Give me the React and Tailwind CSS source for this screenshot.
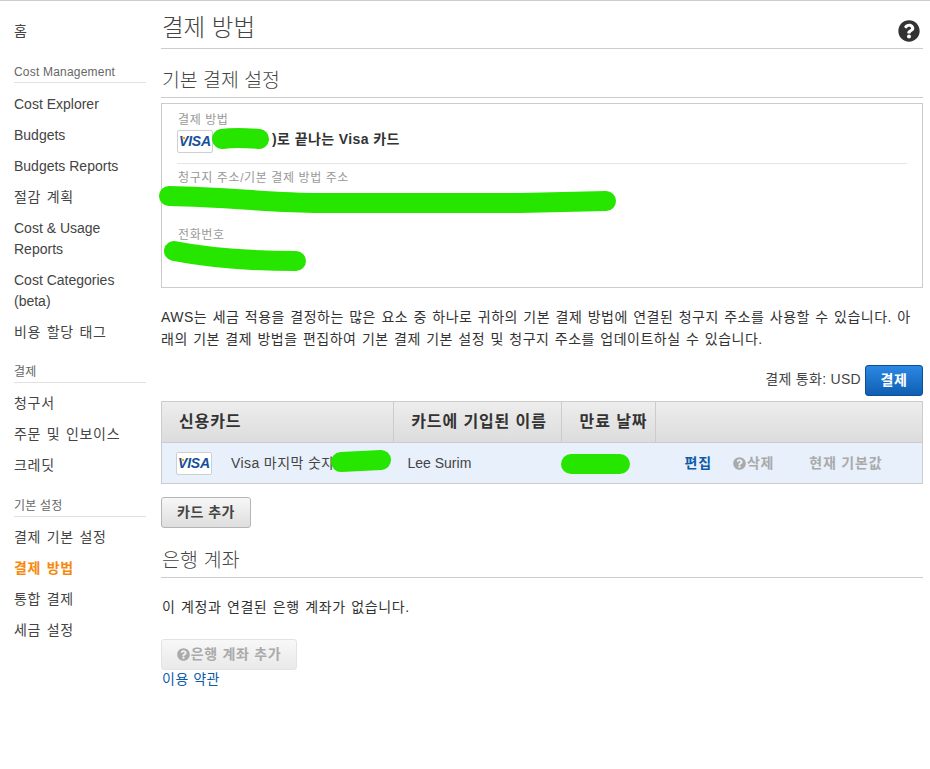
import React from 'react';
import { FaQuestionCircle } from 'react-icons/fa';

const FONT = "font-['Liberation_Sans','Noto_Sans_CJK_KR',sans-serif]";

const sideGroups = [
  { title: 'Cost Management', top: 'mt-[20px]', listGap: 'mt-[11px]', items: ['Cost Explorer', 'Budgets', 'Budgets Reports', '절감 계획', 'Cost & Usage Reports', 'Cost Categories (beta)', '비용 할당 태그'] },
  { title: '결제', top: 'mt-[19px]', listGap: 'mt-[10px]', items: ['청구서', '주문 및 인보이스', '크레딧'] },
  { title: '기본 설정', top: 'mt-[20px]', listGap: 'mt-[10px]', items: ['결제 기본 설정', '결제 방법', '통합 결제', '세금 설정'] },
];

const hasHangul = (text) => /[가-힣]/.test(text);

function VisaLogo({ className }) {
  return (
    <span className={`relative flex items-center justify-center bg-white border border-[#cfcfcf] rounded-[2px] ${className}`}>
      <span className="font-['Liberation_Sans',sans-serif] text-[14px] font-bold italic tracking-[-0.2px] text-[#14509b]">VISA</span>
      <span className="absolute left-[4px] top-[6px] w-[3px] h-[2px] bg-[#f0a81e]"></span>
    </span>
  );
}

function Sidebar() {
  return (
    <aside className="w-[132px] ml-[14px] shrink-0 pt-[20px] text-[14px] leading-[21px] text-[#444]">
      <div>홈</div>
      {sideGroups.map((group) => (
        <div key={group.title} className={group.top}>
          <div className="text-[12px] leading-[21px] text-[#666] tracking-[0.2px] border-b border-[#e1e1e1] h-[21px] mt-[10px]">{group.title}</div>
          <div className={`flex flex-col gap-[10px] ${group.listGap}`}>
            {group.items.map((item) => (
              <div
                key={item}
                className={`${hasHangul(item) ? 'tracking-[0.7px] [word-spacing:1px]' : ''} ${item === '결제 방법' ? 'text-[#f58a0e] font-bold' : ''}`}
              >
                {item}
              </div>
            ))}
          </div>
        </div>
      ))}
    </aside>
  );
}

function Field({ label, children }) {
  return (
    <div>
      <div className="text-[12px] leading-[16px] text-[#999] tracking-[0.6px]">{label}</div>
      {children}
    </div>
  );
}

function Scribbles() {
  // 스크린샷의 가림 표시 (초록색 펜)
  return (
    <svg className="absolute left-0 top-0 pointer-events-none" width="930" height="769" fill="none" stroke="#26e600" strokeWidth="20" strokeLinecap="round" strokeLinejoin="round">
      <path d="M222 138 C235 136 248 137 259 138" />
      <path d="M169 195 C230 196 270 202 320 202 L520 202 L606 200" />
      <path d="M174 250 C210 257 250 260 296 260" />
      <path d="M341 461 L381 459" />
      <path d="M571 463 L620 463" />
    </svg>
  );
}

export default function App() {
  return (
    <div className={`relative w-[930px] h-[769px] bg-white border-t border-[#ccc] flex overflow-hidden ${FONT} text-[#444]`}>
      <Sidebar />

      <main className="ml-[15px] w-[762px]">
        {/* 제목 */}
        <div className="flex items-center justify-between h-[48px] border-b border-[#ccc]">
          <h1 className="text-[23.5px] font-light leading-[30px] text-[#444] ml-[1px] mt-[7px]">결제 방법</h1>
          <FaQuestionCircle className="text-[#333] mr-[3px] mt-[13px]" size={22} />
        </div>

        <h2 className="text-[19.4px] font-light leading-[28px] mt-[17px] ml-[1px] h-[31px] text-[#444]">기본 결제 설정</h2>
        <div className="border-t border-[#ccc]"></div>

        {/* 기본 결제 설정 카드 */}
        <div className="mt-[5px] h-[185px] border border-[#ccc] px-[16px] pt-[8px]">
          <Field label="결제 방법">
            <div className="flex items-center text-[14px] font-bold text-[#333] mt-[2px] pb-[10px] border-b border-[#e5e5e5] w-[730px] -ml-[1px]">
              <VisaLogo className="w-[36px] h-[23px]" />
              <span className="ml-[59px] leading-[18px] mb-[5px] tracking-[0.4px]">)로 끝나는 Visa 카드</span>
            </div>
          </Field>
          <div className="mt-[6px]">
            <Field label="청구지 주소/기본 결제 방법 주소" />
          </div>
          <div className="mt-[41px]">
            <Field label="전화번호" />
          </div>
        </div>

        <p className="mt-[18px] text-[14px] leading-[22px] text-[#333] tracking-[0.5px] [word-spacing:1px]">
          AWS는 세금 적용을 결정하는 많은 요소 중 하나로 귀하의 기본 결제 방법에 연결된 청구지 주소를 사용할 수 있습니다. 아래의 기본 결제 방법을 편집하여 기본 결제 기본 설정 및 청구지 주소를 업데이트하실 수 있습니다.
        </p>

        <div className="flex items-center justify-end gap-[4px] mt-[15px] text-[14px] text-[#444]">
          <span className="tracking-[0.3px] mb-[2px]">결제 통화: USD</span>
          <button className="w-[58px] h-[31px] rounded-[3px] border border-[#0b4f94] bg-gradient-to-b from-[#2b88e3] to-[#0e5fb2] text-white text-[14px] font-bold tracking-[0.5px]">결제</button>
        </div>

        {/* 신용카드 표 */}
        <table className="mt-[5px] w-full table-fixed border border-[#ccc] border-collapse text-[14px]">
          <thead>
            <tr className="h-[41px] bg-gradient-to-b from-[#ededed] to-[#dcdcdc] text-[#333] text-[16px] tracking-[0.9px]">
              <th className="w-[232px] border-r border-[#ccc] text-left pl-[17px] font-bold">신용카드</th>
              <th className="w-[168px] border-r border-[#ccc] pl-[3px] font-bold">카드에 기입된 이름</th>
              <th className="w-[94px] border-r border-[#ccc] pl-[10px] font-bold">만료 날짜</th>
              <th></th>
            </tr>
          </thead>
          <tbody>
            <tr className="h-[41px] bg-[#e8f1fb] border-t border-[#ccc]">
              <td className="pl-[14px]">
                <div className="flex items-center gap-[19px]">
                  <VisaLogo className="w-[36px] h-[23px]" />
                  <span className="text-[#444] tracking-[0.4px]">Visa 마지막 숫자</span>
                </div>
              </td>
              <td className="pl-[14px] text-[#444]">Lee Surim</td>
              <td></td>
              <td className="text-[14px] font-bold tracking-[0.8px]">
                <div className="flex items-center ml-[29px]">
                  <span className="text-[#0f5ba7]">편집</span>
                  <span className="flex items-center text-[#aaa] ml-[21px]">
                    <FaQuestionCircle size={13} className="mr-[1px]" />삭제
                  </span>
                  <span className="text-[#aaa] ml-[35px]">현재 기본값</span>
                </div>
              </td>
            </tr>
          </tbody>
        </table>

        <button className="block mt-[13px] w-[90px] h-[31px] rounded-[3px] border border-[#b5b5b5] bg-gradient-to-b from-[#f7f7f7] to-[#dedede] text-[14px] font-bold text-[#444] tracking-[0.5px]">카드 추가</button>

        <h2 className="text-[19.4px] font-light leading-[28px] mt-[18px] ml-[1px] h-[31px] text-[#444] tracking-[0.2px]">은행 계좌</h2>
        <div className="border-t border-[#ccc]"></div>

        <p className="mt-[19px] ml-[1px] text-[14px] leading-[21px] text-[#333] tracking-[0.6px] [word-spacing:1px]">이 계정과 연결된 은행 계좌가 없습니다.</p>

        <button className="flex items-center justify-center mt-[21px] w-[136px] h-[31px] rounded-[3px] border border-[#e3e3e3] bg-gradient-to-b from-[#f8f8f8] to-[#e9e9e9] text-[14px] font-bold text-[#aaa] tracking-[0.7px]">
          <FaQuestionCircle size={13} className="mr-[1px]" />은행 계좌 추가
        </button>
        <a className="block ml-[1px] text-[14px] leading-[18px] text-[#0f5ba7] tracking-[0.5px]">이용 약관</a>
      </main>

      <Scribbles />
    </div>
  );
}
